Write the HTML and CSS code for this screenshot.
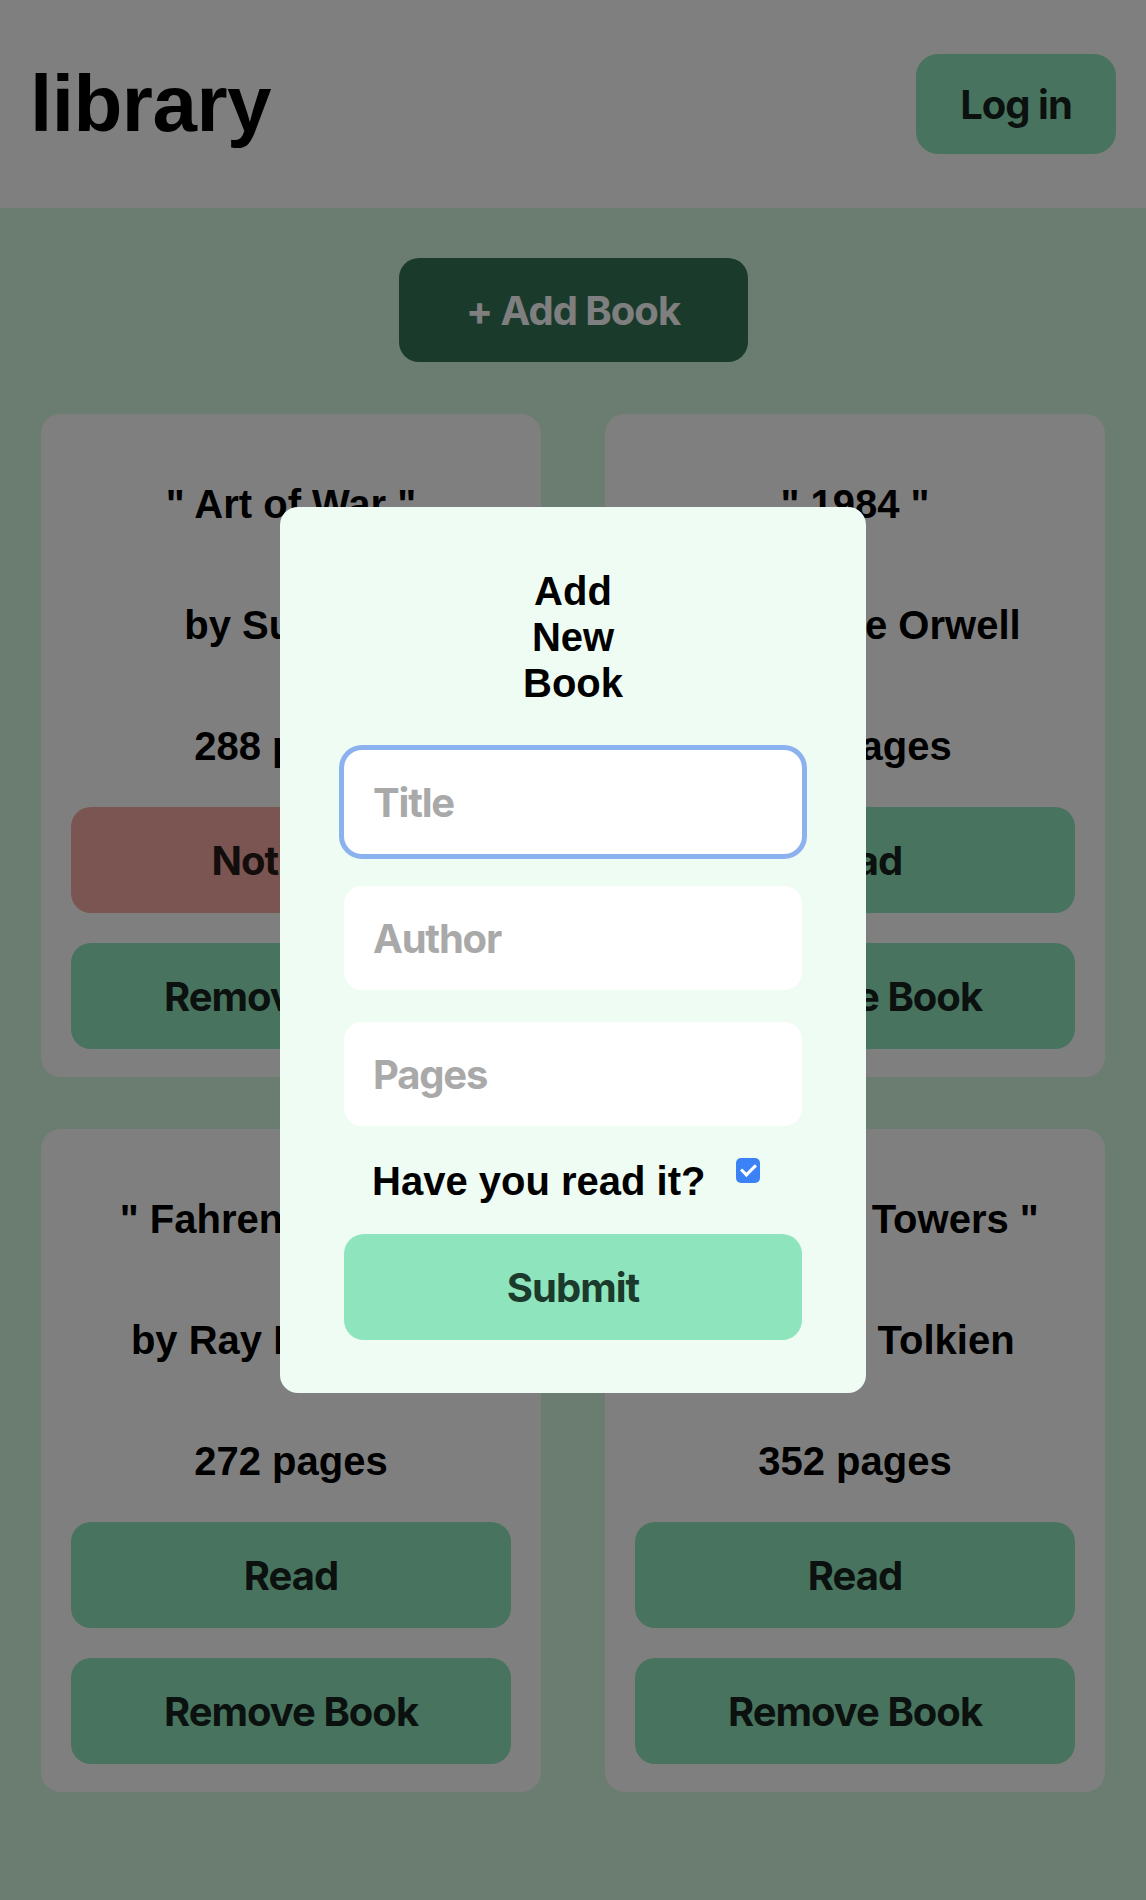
FILE: index.html
```html
<!DOCTYPE html>
<html lang="en">
<head>
<meta charset="utf-8">
<title>library</title>
<link rel="stylesheet" href="styles.css">
</head>
<body>
<header class="topbar">
  <h1 class="brand">library</h1>
  <button class="btn btn-login">Log in</button>
</header>
<main class="content">
  <button class="btn btn-add">+ Add Book</button>
  <section class="shelf">
    <article class="card">
      <p class="card-title">" Art of War "</p>
      <p class="card-line">by Sun Tzu</p>
      <p class="card-line">288 pages</p>
      <button class="btn card-btn btn-unread">Not read</button>
      <button class="btn card-btn btn-read">Remove Book</button>
    </article>
    <article class="card">
      <p class="card-title">" 1984 "</p>
      <p class="card-line">by George Orwell</p>
      <p class="card-line">328 pages</p>
      <button class="btn card-btn btn-read">Read</button>
      <button class="btn card-btn btn-read">Remove Book</button>
    </article>
    <article class="card">
      <p class="card-title">" Fahrenheit 451 "</p>
      <p class="card-line">by Ray Bradbury</p>
      <p class="card-line">272 pages</p>
      <button class="btn card-btn btn-read">Read</button>
      <button class="btn card-btn btn-read">Remove Book</button>
    </article>
    <article class="card">
      <p class="card-title">" The Two Towers "</p>
      <p class="card-line">by J.R.R. Tolkien</p>
      <p class="card-line">352 pages</p>
      <button class="btn card-btn btn-read">Read</button>
      <button class="btn card-btn btn-read">Remove Book</button>
    </article>
  </section>
</main>
<div class="backdrop"></div>
<form class="dialog">
  <h2 class="dialog-title">Add New Book</h2>
  <input class="field is-focused" type="text" placeholder="Title" autofocus>
  <input class="field" type="text" placeholder="Author">
  <input class="field" type="text" placeholder="Pages">
  <label class="read-row">
    <span class="read-label">Have you read it?</span>
    <input class="check" type="checkbox" checked>
  </label>
  <button class="btn btn-submit" type="button">Submit</button>
</form>
</body>
</html>
```

FILE: styles.css
```css
* { box-sizing: border-box; }

html, body {
  margin: 0;
  min-height: 100%;
}

body {
  background: #d6fae2;
  font-family: "Liberation Sans", Arial, sans-serif;
  color: #000;
  min-height: 100vh;
}

.btn {
  font-family: Inter, "Noto Sans", sans-serif;
  font-weight: 700;
  font-size: 40px;
  border: none;
  border-radius: 22px;
  color: rgba(0, 0, 0, 0.86);
  cursor: pointer;
  letter-spacing: -1px;
}

.topbar {
  height: 208px;
  background: #fff;
  padding: 0 30px;
  display: flex;
  align-items: center;
  justify-content: space-between;
}

.brand {
  margin: 0;
  font-size: 80px;
  font-weight: 700;
  letter-spacing: -0.5px;
}

.btn-login {
  width: 200px;
  height: 100px;
  background: #90e6bc;
  padding: 0;
}

.content {
  padding: 50px 41px 60px;
}

.btn-add {
  display: block;
  margin: 0 auto 52px;
  width: 349px;
  height: 104px;
  background: #347456;
  color: #fff;
  border-radius: 20px;
}

.shelf {
  display: grid;
  grid-template-columns: 1fr 1fr;
  column-gap: 64px;
  row-gap: 52px;
}

.card {
  background: #fff;
  border-radius: 20px;
  padding: 30px 30px 28px;
  display: flex;
  flex-direction: column;
  text-align: center;
}

.card-title,
.card-line {
  margin: 0;
  font-size: 40px;
  font-weight: 700;
  line-height: 46px;
}

.card-title { margin-top: 37px; }
.card-line { margin-top: 75px; }
.card-line + .card-btn { margin-top: 38px; }

.card-btn {
  height: 106px;
  width: 100%;
  border-radius: 20px;
}

.card-btn + .card-btn { margin-top: 30px; }

.btn-read { background: #90e6bc; }
.btn-unread { background: #f4aaa4; }

.backdrop {
  position: fixed;
  inset: 0;
  background: rgba(0, 0, 0, 0.5);
}

.dialog {
  position: fixed;
  top: 50%;
  left: 50%;
  transform: translate(-50%, -50%);
  width: 586px;
  background: #effcf4;
  border-radius: 18px;
  padding: 61px 64px 53px;
  display: flex;
  flex-direction: column;
}

.dialog-title {
  margin: 0 auto 44px;
  width: min-content;
  text-align: center;
  font-size: 40px;
  line-height: 46px;
  font-weight: 700;
}

.field {
  height: 104px;
  width: 100%;
  border: none;
  border-radius: 18px;
  background: #fff;
  padding: 0 29px;
  font-family: Inter, "Noto Sans", sans-serif;
  font-size: 40px;
  font-weight: 700;
  letter-spacing: -1.2px;
  color: #000;
  caret-color: #000;
  outline: none;
}

.field + .field { margin-top: 32px; }

.field::placeholder {
  color: #a9a9a9;
  opacity: 1;
}

.field.is-focused,
.field:focus {
  outline: 5px solid #8cb1ef;
  outline-offset: 0;
}

.read-row {
  margin-top: 32px;
  padding-left: 28px;
  display: flex;
  align-items: flex-start;
  gap: 31px;
}

.read-label {
  font-size: 40px;
  line-height: 46px;
  font-weight: 700;
}

.check {
  appearance: none;
  -webkit-appearance: none;
  margin: 0;
  width: 24px;
  height: 25px;
  border-radius: 5px;
  background: #3b82f6;
  position: relative;
}

.check::after {
  content: "";
  position: absolute;
  left: 8px;
  top: 3px;
  width: 6px;
  height: 12px;
  border: solid #fff;
  border-width: 0 3px 3px 0;
  transform: rotate(45deg);
}

.btn-submit {
  margin-top: 30px;
  height: 106px;
  width: 100%;
  background: #8ee4bc;
  color: #1b3a2c;
  border-radius: 20px;
}
```
